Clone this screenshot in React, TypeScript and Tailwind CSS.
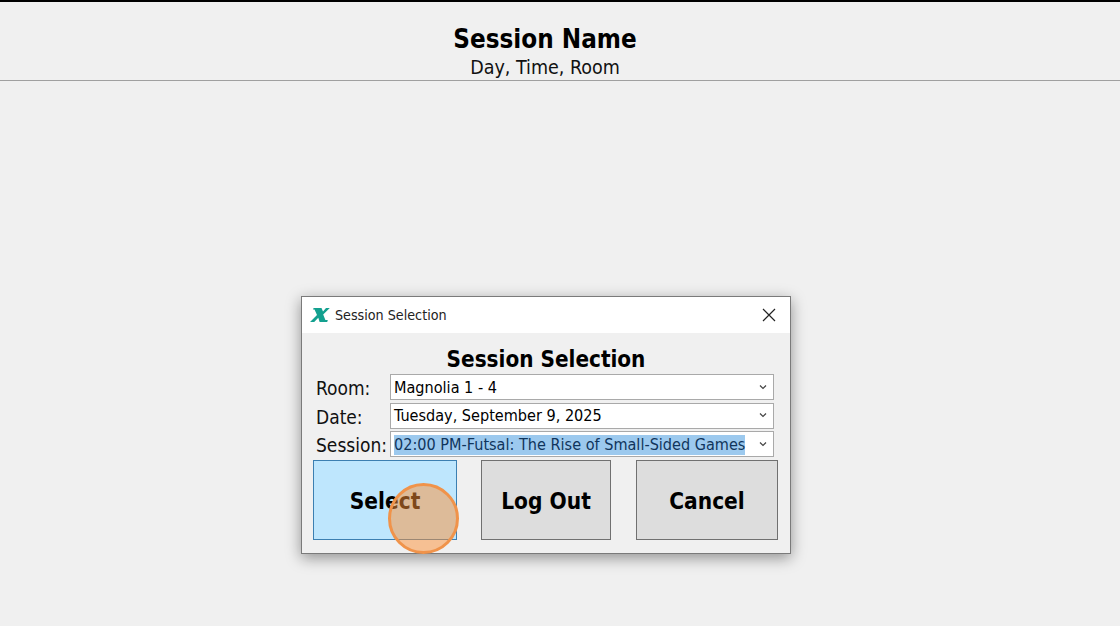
import React from "react";

const font = "[font-family:'DejaVu_Sans','Noto_Sans',sans-serif] font-stretch-[87%]";

function Chevron() {
  return (
    <svg width="8" height="6" viewBox="0 0 8 6" className="shrink-0 -mt-[1px]">
      <path d="M1 1.5 L4 4.5 L7 1.5" fill="none" stroke="#444" strokeWidth="1.2" />
    </svg>
  );
}

function Row({ label, value, selected, textClass }: { label: string; value: string; selected?: boolean; textClass: string }) {
  return (
    <div className="flex items-center h-[28.5px]">
      <div className="w-[75px] ml-[1px] -mr-[1px] mt-[2px] text-[19px] leading-[26px] text-[#111] whitespace-nowrap">{label}</div>
      <div className="w-[384px] h-[26px] bg-white border border-[#a9a9a9] flex items-center pl-[3px] pr-[6px] justify-between">
        <span className={`text-[16.1px] leading-[20px] whitespace-nowrap ${textClass} ${selected ? "bg-[#9cc9ee] text-[#10355c]" : "text-black"}`}>{value}</span>
        <Chevron />
      </div>
    </div>
  );
}

export default function App() {
  return (
    <div className={`w-[1120px] h-[626px] overflow-hidden bg-[#f0f0f0] flex flex-col ${font}`}>
      <div className="h-[2px] bg-black" />
      <div className="h-[79px] border-b border-[#a0a0a0] flex flex-col items-center">
        <div className="mt-[19px] ml-[-30px] text-[25.75px] leading-[36px] font-bold text-black">Session Name</div>
        <div className="-mt-[1px] ml-[-30px] text-[19.5px] leading-[24px] text-[#111]">Day, Time, Room</div>
      </div>
      <div className="pt-[215px] pl-[301px]">
        <div className="relative w-[490px] h-[258px] border border-[#7a7a7a] bg-[#f0f0f0] shadow-[0_4px_14px_rgba(0,0,0,0.4)] flex flex-col">
          <div className="h-[36px] bg-white flex items-center pl-[8px] pr-[13px] shrink-0">
            <svg width="20" height="16" viewBox="0 0 20 16" className="shrink-0">
              <path d="M0 15 L7 8 L4.5 2.4 H3 L3.6 1 H11.5 L13 4.5 L16 1 H19.8 L13.2 7.6 L15.4 13 H17.8 L17.2 15 H9.6 L8.3 10.8 L4.2 15 Z" fill="#13a08f" />
            </svg>
            <span className="ml-[5px] text-[14.2px] leading-[18px] text-[#222]">Session Selection</span>
            <svg width="14" height="14" viewBox="0 0 14 14" className="ml-auto -translate-x-[1px]">
              <path d="M1 1 L13 13 M13 1 L1 13" stroke="#222" strokeWidth="1.2" fill="none" />
            </svg>
          </div>
          <div className="px-[13px] flex flex-col">
            <div className="text-center h-[26px] mt-[13px] text-[22.3px] leading-[26px] font-bold text-black">Session Selection</div>
            <div className="mt-[1px]">
              <Row label="Room:" value="Magnolia 1 - 4" textClass="mt-[1px]" />
              <Row label="Date:" value="Tuesday, September 9, 2025" textClass="" />
              <Row label="Session:" value="02:00 PM-Futsal: The Rise of Small-Sided Games" selected textClass="mt-[1px]" />
            </div>
            <div className="flex -ml-[2px] mt-[1px] h-[80px] text-[22.5px] font-bold text-black">
              <div className="w-[144px] shrink-0 pt-[4px] bg-[#bee6fd] border border-[#3c7fb1] flex items-center justify-center">Select</div>
              <div className="w-[130px] shrink-0 pt-[4px] ml-[24px] bg-[#dddddd] border border-[#707070] flex items-center justify-center">Log Out</div>
              <div className="w-[142px] shrink-0 pt-[4px] ml-[25px] bg-[#dddddd] border border-[#707070] flex items-center justify-center">Cancel</div>
            </div>
          </div>
          <div className="absolute left-[86px] top-[186px] w-[71px] h-[71px] rounded-full border-[3px] border-[#f0934a] bg-[rgba(252,144,54,0.5)]" />
        </div>
      </div>
    </div>
  );
}
